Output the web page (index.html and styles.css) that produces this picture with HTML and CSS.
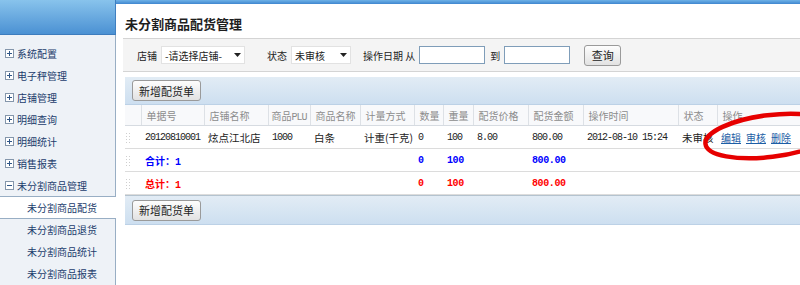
FILE: index.html
```html
<!DOCTYPE html>
<html lang="zh-CN">
<head>
    <meta charset="UTF-8">
    <title>未分割商品配货管理</title>
    <link rel="stylesheet" href="styles.css">
</head>
<body>
    <div class="page">
        <aside class="sidebar">
            <div class="side-head"></div>
            <ul class="menu">
                <li><svg class="tree" viewBox="0 0 9 9"><rect x="0.5" y="0.5" width="8" height="8" fill="#fff" stroke="#8496ab"/><path d="M2 4.5h5M4.5 2v5" stroke="#2f5687"/></svg>系统配置</li>
                <li><svg class="tree" viewBox="0 0 9 9"><rect x="0.5" y="0.5" width="8" height="8" fill="#fff" stroke="#8496ab"/><path d="M2 4.5h5M4.5 2v5" stroke="#2f5687"/></svg>电子秤管理</li>
                <li><svg class="tree" viewBox="0 0 9 9"><rect x="0.5" y="0.5" width="8" height="8" fill="#fff" stroke="#8496ab"/><path d="M2 4.5h5M4.5 2v5" stroke="#2f5687"/></svg>店铺管理</li>
                <li><svg class="tree" viewBox="0 0 9 9"><rect x="0.5" y="0.5" width="8" height="8" fill="#fff" stroke="#8496ab"/><path d="M2 4.5h5M4.5 2v5" stroke="#2f5687"/></svg>明细查询</li>
                <li><svg class="tree" viewBox="0 0 9 9"><rect x="0.5" y="0.5" width="8" height="8" fill="#fff" stroke="#8496ab"/><path d="M2 4.5h5M4.5 2v5" stroke="#2f5687"/></svg>明细统计</li>
                <li><svg class="tree" viewBox="0 0 9 9"><rect x="0.5" y="0.5" width="8" height="8" fill="#fff" stroke="#8496ab"/><path d="M2 4.5h5M4.5 2v5" stroke="#2f5687"/></svg>销售报表</li>
                <li><svg class="tree" viewBox="0 0 9 9"><rect x="0.5" y="0.5" width="8" height="8" fill="#fff" stroke="#8496ab"/><path d="M2 4.5h5" stroke="#2f5687"/></svg>未分割商品管理</li>
            </ul>
            <div class="sub-active">未分割商品配货</div>
            <ul class="submenu">
                <li>未分割商品退货</li>
                <li>未分割商品统计</li>
                <li>未分割商品报表</li>
            </ul>
        </aside>

        <main class="content">
            <div class="content-bar"></div>
            <h1 class="title">未分割商品配货管理</h1>

            <div class="filter">
                <span class="lbl">店铺</span>
                <div class="select shop"><span>-请选择店铺-</span><svg viewBox="0 0 7 4"><path d="M0 0h7L3.5 4z" fill="#222"/></svg></div>
                <span class="lbl gap-l">状态</span>
                <div class="select state"><span>未审核</span><svg viewBox="0 0 7 4"><path d="M0 0h7L3.5 4z" fill="#222"/></svg></div>
                <span class="lbl gap-m">操作日期 从</span>
                <input class="date" type="text">
                <span class="lbl">到</span>
                <input class="date" type="text">
                <button class="btn query" type="button">查询</button>
            </div>

            <div class="grid">
                <div class="toolbar"><button class="btn" type="button">新增配货单</button></div>
                <table>
                    <colgroup>
                        <col style="width:16px"><col style="width:63px"><col style="width:64px"><col style="width:42px">
                        <col style="width:50px"><col style="width:54px"><col style="width:29px"><col style="width:30px">
                        <col style="width:55px"><col style="width:55px"><col style="width:95px"><col style="width:39px"><col>
                    </colgroup>
                    <thead>
                        <tr>
                            <th class="grip-col"></th><th>单据号</th><th>店铺名称</th><th class="tight">商品<span class="num">PLU</span></th><th>商品名称</th>
                            <th>计量方式</th><th>数量</th><th>重量</th><th>配货价格</th><th>配货金额</th>
                            <th>操作时间</th><th>状态</th><th>操作</th>
                        </tr>
                    </thead>
                    <tbody>
                        <tr>
                            <td><span class="grip"></span></td>
                            <td class="num">20120810001</td>
                            <td class="big">炫点江北店</td>
                            <td class="num">1000</td>
                            <td class="big">白条</td>
                            <td class="big">计重(千克)</td>
                            <td class="num">0</td>
                            <td class="num">100</td>
                            <td class="num">8.00</td>
                            <td class="num">800.00</td>
                            <td class="num">2012-08-10 15:24</td>
                            <td class="big">未审核</td>
                            <td class="ops"><a href="#">编辑</a><a href="#">审核</a><a href="#">删除</a></td>
                        </tr>
                        <tr class="sum">
                            <td><span class="grip"></span></td>
                            <td colspan="5">合计：<span class="num">1</span></td>
                            <td class="num">0</td>
                            <td class="num">100</td>
                            <td></td>
                            <td class="num">800.00</td>
                            <td colspan="3"></td>
                        </tr>
                        <tr class="total">
                            <td><span class="grip"></span></td>
                            <td colspan="5">总计：<span class="num">1</span></td>
                            <td class="num">0</td>
                            <td class="num">100</td>
                            <td></td>
                            <td class="num">800.00</td>
                            <td colspan="3"></td>
                        </tr>
                    </tbody>
                </table>
                <div class="toolbar bottom"><button class="btn" type="button">新增配货单</button></div>
            </div>
        </main>
    </div>

    <svg class="mark" viewBox="0 0 110 72"><ellipse cx="80" cy="36" rx="65" ry="21" transform="rotate(-7 80 36)" fill="none" stroke="#e60000" stroke-width="4.5"/></svg>
</body>
</html>
```

FILE: styles.css
```css
body {
    margin: 0;
    font-family: "Noto Sans CJK SC", sans-serif;
    font-size: 10px;
    color: #222;
    background: #fff;
    overflow: hidden;
}

.page {
    display: flex;
    height: 285px;
}

/* left menu */
.sidebar {
    width: 116px;
    flex: none;
    display: flex;
    flex-direction: column;
}

.side-head {
    height: 36px;
    background: linear-gradient(#88c3ec, #4b91d3);
    border-right: 1px solid #3f7fc0;
    border-bottom: 1px solid #3d7cbd;
    box-sizing: border-box;
}

.menu, .submenu {
    list-style: none;
    margin: 0;
    background: #eef2f7;
    border-right: 1px solid #98aec4;
    color: #1b3c6c;
}

.menu {
    padding: 7px 0 0;
    border-bottom: 1px solid #98aec4;
}

.menu li {
    height: 22px;
    display: flex;
    align-items: center;
    gap: 3px;
    padding-left: 5px;
}

.tree {
    width: 9px;
    height: 9px;
}

.sub-active {
    height: 21px;
    line-height: 21px;
    padding-left: 27px;
    color: #1b3c6c;
    background: #fff;
}

.submenu {
    flex: 1;
    padding: 0;
    border-top: 1px solid #98aec4;
}

.submenu li {
    height: 22px;
    line-height: 22px;
    padding-left: 27px;
}

/* main area */
.content {
    flex: 1;
    min-width: 0;
}

.content-bar {
    height: 4px;
    background: linear-gradient(#6fb2e7, #3f86cf);
}

.title {
    margin: 0 0 4px;
    padding: 10px 0 0 9px;
    font-size: 13px;
    font-weight: bold;
    line-height: 20px;
    color: #1e1e1e;
}

.filter {
    margin-left: 7px;
    height: 32px;
    display: flex;
    align-items: center;
    padding-left: 14px;
    background: #f4f4f4;
    border-top: 1px solid #d4d4d4;
    border-bottom: 1px solid #d4d4d4;
}

.lbl {
    margin-right: 4px;
    white-space: nowrap;
}

.gap-l { margin-left: 22px; }
.gap-m { margin-left: 12px; }

.select {
    height: 18px;
    display: flex;
    align-items: center;
    justify-content: space-between;
    padding: 0 3px;
    background: #fff;
    border: 1px solid #e2e2e2;
    box-sizing: border-box;
}

.select svg {
    width: 7px;
    height: 4px;
}

.shop { width: 84px; }
.state { width: 60px; }

.date {
    width: 66px;
    height: 18px;
    margin: 0 5px 0 0;
    padding: 0;
    border: 1px solid #7f9db9;
    box-sizing: border-box;
}

.btn {
    height: 21px;
    padding: 0 6px;
    font-family: "Noto Sans CJK SC", sans-serif;
    font-size: 11px;
    color: #222;
    background: linear-gradient(#fdfdfd, #e2e2e2);
    border: 1px solid #9a9a9a;
    border-radius: 3px;
}

.query {
    margin-left: 9px;
    width: 37px;
}

.grid {
    margin: 5px 0 0 9px;
}

.toolbar {
    height: 27px;
    display: flex;
    align-items: center;
    padding-left: 7px;
    background: linear-gradient(#e2ecf5, #cddff0);
    border-bottom: 1px solid #bcd1e6;
}

.toolbar.bottom {
    height: 28px;
    border-top: 1px solid #b4c3cf;
}

table {
    width: 100%;
    table-layout: fixed;
    border-collapse: collapse;
}

th {
    height: 20px;
    padding: 0 0 0 5px;
    text-align: left;
    font-weight: normal;
    color: #8c8c8c;
    background: #f8f9fb;
    border-left: 1px solid #dde1e6;
    border-bottom: 1px solid #d6dbe1;
    white-space: nowrap;
    overflow: hidden;
}

th.tight {
    padding-left: 3px;
}

th.grip-col {
    border-left: none;
}

td {
    height: 22px;
    padding: 0 0 0 4px;
    border-bottom: 1px solid #dcdcdc;
    white-space: nowrap;
    overflow: hidden;
}

.num {
    font-family: "Liberation Mono", monospace;
    font-size: 10px;
    letter-spacing: -1px;
}

.big {
    font-size: 10.5px;
}

.grip {
    display: block;
    width: 6px;
    height: 11px;
    margin-left: -4px;
    background-image: radial-gradient(circle, #cfcfcf 0.8px, transparent 1px);
    background-size: 3px 3px;
}

.sum td { color: #0000ff; font-weight: bold; }
.total td { color: #ff0000; font-weight: bold; }

.sum .num, .total .num {
    letter-spacing: -0.4px;
}

.ops a {
    color: #1d5ea6;
    text-decoration: underline;
    margin-right: 5px;
}

.mark {
    position: absolute;
    left: 690px;
    top: 100px;
    width: 110px;
    height: 72px;
}
```
